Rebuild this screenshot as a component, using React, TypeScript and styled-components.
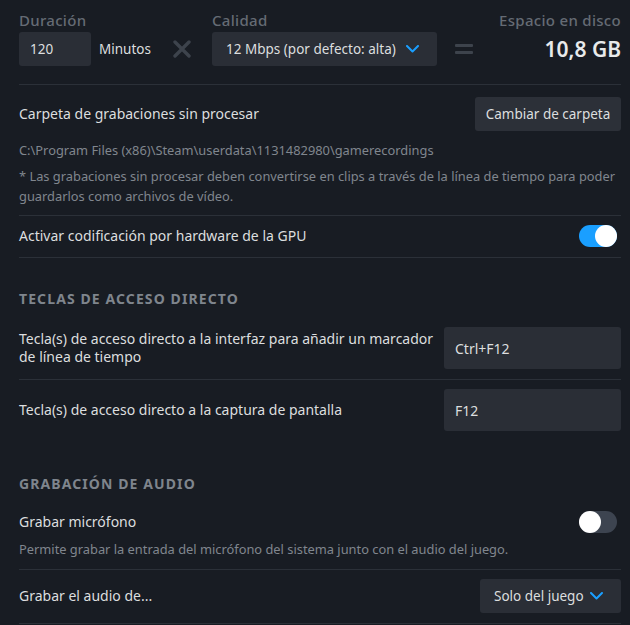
import React from "react";
import styled, { createGlobalStyle } from "styled-components";

const GlobalStyle = createGlobalStyle`
  html, body { margin: 0; padding: 0; background: #181c23; }
  body { font-family: "Noto Sans", "Open Sans", Arial, sans-serif; color: #dcdedf; }
  * { box-sizing: border-box; }
`;

const Page = styled.div`
  width: 630px;
  height: 625px;
  overflow: hidden;
  padding: 10px 9px 0 19px;
  background: #181c23;
`;

const TopRow = styled.div`
  display: flex;
  align-items: flex-end;
  padding-bottom: 18px;
  border-bottom: 1px solid #2b3038;
`;

const Field = styled.div<{ $w?: number; $grow?: boolean }>`
  display: flex;
  flex-direction: column;
  width: ${(p) => (p.$w ? `${p.$w}px` : "auto")};
  flex: ${(p) => (p.$grow ? 1 : "none")};
`;

const FieldLabel = styled.div<{ $right?: boolean }>`
  font-size: 15px;
  line-height: 20px;
  height: 20px;
  margin-bottom: 2px;
  color: #656b74;
  font-weight: 500;
  letter-spacing: 0.3px;
  text-align: ${(p) => (p.$right ? "right" : "left")};
`;

const InlineRow = styled.div`
  display: flex;
  align-items: center;
  height: 34px;
`;

const NumberBox = styled.div`
  width: 72px;
  height: 34px;
  background: #2a2e36;
  border-radius: 3px;
  display: flex;
  align-items: center;
  padding-left: 11px;
  font-size: 13.5px;
  color: #dcdedf;
`;

const Unit = styled.span`
  margin-left: 8px;
  font-size: 13.5px;
  color: #dcdedf;
`;

const Operator = styled.div<{ $w: number }>`
  width: ${(p) => p.$w}px;
  height: 34px;
  display: flex;
  align-items: center;
  justify-content: center;
  color: #3d434c;
`;

const Select = styled.div<{ $w: number }>`
  width: ${(p) => p.$w}px;
  height: 34px;
  background: #2a2e36;
  border-radius: 3px;
  display: flex;
  align-items: center;
  justify-content: space-between;
  padding: 0 18px 0 14px;
  font-size: 13.5px;
  color: #dcdedf;
`;

const DiskValue = styled.div`
  height: 34px;
  display: flex;
  align-items: center;
  justify-content: flex-end;
  font-size: 21px;
  font-weight: 600;
  color: #e8eaeb;
`;

const Row = styled.div<{ $noBorder?: boolean }>`
  display: flex;
  align-items: center;
  justify-content: space-between;
  padding: 9px 0 10px;
  border-bottom: ${(p) => (p.$noBorder ? "none" : "1px solid #2b3038")};
`;

const Block = styled.div<{ $pt?: number; $pb?: number; $noBorder?: boolean }>`
  padding-top: ${(p) => p.$pt ?? 12}px;
  padding-bottom: ${(p) => p.$pb ?? 10}px;
  border-bottom: ${(p) => (p.$noBorder ? "none" : "1px solid #2b3038")};
`;

const HeadRow = styled.div`
  display: flex;
  align-items: center;
  justify-content: space-between;
`;

const Title = styled.div`
  font-size: 14px;
  line-height: 18px;
  color: #dcdedf;
`;

const Muted = styled.div<{ $mt?: number }>`
  font-size: 12.85px;
  line-height: 20px;
  color: #80868e;
  margin-top: ${(p) => p.$mt ?? 0}px;
`;

const Button = styled.button`
  height: 34px;
  width: 146px;
  border: none;
  border-radius: 3px;
  background: #2c3038;
  color: #dcdedf;
  font-family: inherit;
  font-size: 13.5px;
  padding: 0;
`;

const SectionHeader = styled.div<{ $pt: number }>`
  padding-top: ${(p) => p.$pt}px;
  padding-bottom: 9px;
  font-size: 14px;
  line-height: 20px;
  font-weight: 700;
  letter-spacing: 1.1px;
  text-transform: uppercase;
  color: #7f858d;
`;

const KeyBox = styled.div`
  width: 177px;
  height: 42px;
  flex-shrink: 0;
  background: #2a2e36;
  border-radius: 3px;
  display: flex;
  align-items: center;
  padding-left: 11px;
  font-size: 14px;
  color: #dcdedf;
`;

const RowText = styled.div`
  font-size: 14px;
  line-height: 18px;
  color: #dcdedf;
  max-width: 420px;
`;

const Track = styled.div<{ $on: boolean }>`
  width: 38px;
  height: 22px;
  margin-right: 4px;
  border-radius: 11px;
  background: ${(p) => (p.$on ? "#1a9fff" : "#3d4450")};
  display: flex;
  justify-content: ${(p) => (p.$on ? "flex-end" : "flex-start")};
  flex-shrink: 0;
`;

const Knob = styled.div`
  width: 22px;
  height: 22px;
  border-radius: 50%;
  background: #ffffff;
`;

const Chevron = () => (
  <svg width="13" height="8" viewBox="0 0 13 8" fill="none">
    <path d="M1 1 L6.5 6.5 L12 1" stroke="#1a9fff" strokeWidth="2" strokeLinecap="round" strokeLinejoin="round" />
  </svg>
);

const Times = () => (
  <svg width="18" height="18" viewBox="0 0 18 18">
    <path d="M2 2 L16 16 M16 2 L2 16" stroke="currentColor" strokeWidth="3.4" strokeLinecap="round" />
  </svg>
);

const Equals = () => (
  <svg width="18" height="12" viewBox="0 0 18 12">
    <rect x="0" y="1" width="18" height="3" rx="1" fill="currentColor" />
    <rect x="0" y="8" width="18" height="3" rx="1" fill="currentColor" />
  </svg>
);

const Toggle = ({ on }: { on: boolean }) => (
  <Track $on={on}>
    <Knob />
  </Track>
);

export default function App() {
  return (
    <>
      <GlobalStyle />
      <Page>
        <TopRow>
          <Field $w={133}>
            <FieldLabel>Duración</FieldLabel>
            <InlineRow>
              <NumberBox>120</NumberBox>
              <Unit>Minutos</Unit>
            </InlineRow>
          </Field>
          <Operator $w={60}>
            <Times />
          </Operator>
          <Field $w={225}>
            <FieldLabel>Calidad</FieldLabel>
            <Select $w={225}>
              <span>12 Mbps (por defecto: alta)</span>
              <Chevron />
            </Select>
          </Field>
          <Operator $w={54}>
            <Equals />
          </Operator>
          <Field $grow>
            <FieldLabel $right>Espacio en disco</FieldLabel>
            <DiskValue>10,8 GB</DiskValue>
          </Field>
        </TopRow>

        <Block $pt={12} $pb={9}>
          <HeadRow>
            <Title>Carpeta de grabaciones sin procesar</Title>
            <Button>Cambiar de carpeta</Button>
          </HeadRow>
          <Muted $mt={9}>C:\Program Files (x86)\Steam\userdata\1131482980\gamerecordings</Muted>
          <Muted $mt={6}>
            * Las grabaciones sin procesar deben convertirse en clips a través de la línea de tiempo para poder
            guardarlos como archivos de vídeo.
          </Muted>
        </Block>

        <Row>
          <RowText>Activar codificación por hardware de la GPU</RowText>
          <Toggle on />
        </Row>

        <SectionHeader $pt={31}>Teclas de acceso directo</SectionHeader>
        <Row>
          <RowText>Tecla(s) de acceso directo a la interfaz para añadir un marcador de línea de tiempo</RowText>
          <KeyBox>Ctrl+F12</KeyBox>
        </Row>
        <Row $noBorder>
          <RowText>Tecla(s) de acceso directo a la captura de pantalla</RowText>
          <KeyBox>F12</KeyBox>
        </Row>

        <SectionHeader $pt={33}>Grabación de audio</SectionHeader>
        <Block $pt={8} $pb={10}>
          <HeadRow>
            <RowText>Grabar micrófono</RowText>
            <Toggle on={false} />
          </HeadRow>
          <Muted $mt={6}>Permite grabar la entrada del micrófono del sistema junto con el audio del juego.</Muted>
        </Block>
        <Row>
          <RowText>Grabar el audio de...</RowText>
          <Select $w={141}>
            <span>Solo del juego</span>
            <Chevron />
          </Select>
        </Row>
      </Page>
    </>
  );
}
